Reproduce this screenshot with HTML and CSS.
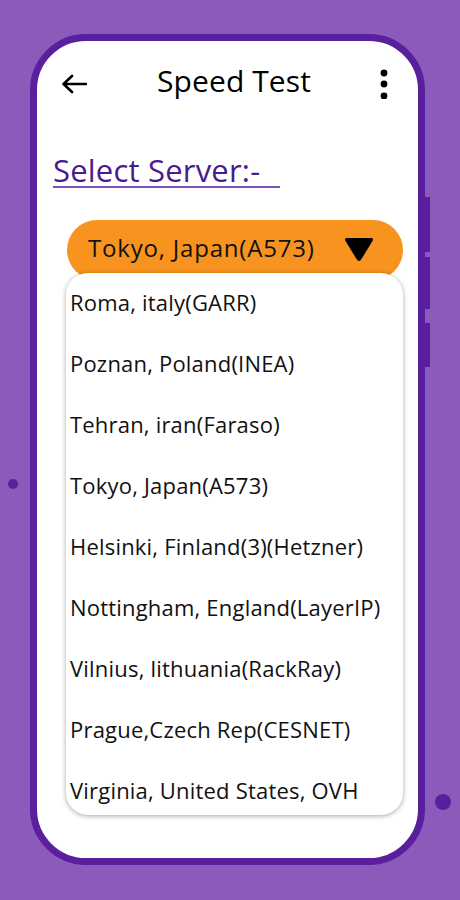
FILE: index.html
```html
<!DOCTYPE html>
<html lang="en">
<head>
  <meta charset="UTF-8">
  <meta name="viewport" content="width=device-width, initial-scale=1.0">
  <title>Speed Test</title>
  <link rel="stylesheet" href="styles.css">
</head>
<body>

  <span class="dot dot-left"></span>
  <span class="dot dot-right"></span>

  <div class="phone">
    <span class="side-btn btn-1"></span>
    <span class="side-btn btn-2"></span>
    <span class="side-btn btn-3"></span>

    <div class="screen">
      <header class="top-bar">
        <svg class="back" width="26" height="20" viewBox="0 0 26 20">
          <path d="M25 10H3M11 2L2.5 10L11 18" fill="none" stroke="#000" stroke-width="2.6" stroke-linecap="round" stroke-linejoin="round"/>
        </svg>
        <h1>Speed Test</h1>
        <svg class="menu" width="8" height="30" viewBox="0 0 8 30">
          <circle cx="4" cy="4" r="3.4"/>
          <circle cx="4" cy="15" r="3.4"/>
          <circle cx="4" cy="27" r="3.4"/>
        </svg>
      </header>

      <h2 class="label">Select Server:-</h2>

      <div class="dropdown">
        <div class="selected">
          <span>Tokyo, Japan(A573)</span>
          <svg class="caret" width="32" height="28" viewBox="0 0 32 28">
            <path d="M4 3H28Q31 3 29.5 6L18.5 24Q16 28 13.5 24L2.5 6Q1 3 4 3Z" fill="#000"/>
          </svg>
        </div>

        <ul class="options">
          <li>Roma, italy(GARR)</li>
          <li>Poznan, Poland(INEA)</li>
          <li>Tehran, iran(Faraso)</li>
          <li>Tokyo, Japan(A573)</li>
          <li>Helsinki, Finland(3)(Hetzner)</li>
          <li>Nottingham, England(LayerIP)</li>
          <li>Vilnius, lithuania(RackRay)</li>
          <li>Prague,Czech Rep(CESNET)</li>
          <li>Virginia, United States, OVH</li>
        </ul>
      </div>
    </div>
  </div>

</body>
</html>
```

FILE: styles.css
```css
/* General Styles */
body {
  font-family: 'Open Sans', 'Noto Sans', sans-serif;
  background-color: #8b5bbb;
  margin: 0;
  padding: 34px 0 0 30px;
  height: 900px;
  box-sizing: border-box;
  overflow: hidden;
  position: relative;
}

.dot {
  position: absolute;
  border-radius: 50%;
  background-color: #5a1f9d;
}

.dot-left {
  left: 8px;
  top: 479px;
  width: 10px;
  height: 10px;
}

.dot-right {
  left: 435px;
  top: 794px;
  width: 16px;
  height: 16px;
}

/* Phone frame */
.phone {
  position: relative;
  width: 395px;
  height: 831px;
  box-sizing: border-box;
  border: 7px solid #5a1f9d;
  border-radius: 56px;
  background-color: #ffffff;
}

.side-btn {
  position: absolute;
  right: -12px;
  width: 5px;
  background-color: #5a1f9d;
}

.btn-1 { top: 156px; height: 55px; }
.btn-2 { top: 216px; height: 52px; }
.btn-3 { top: 282px; height: 44px; }

.screen {
  height: 100%;
  border-radius: 49px;
  overflow: hidden;
}

/* Header */
.top-bar {
  display: flex;
  align-items: center;
  height: 52px;
  margin-top: 17px;
  padding: 0 30px 0 24px;
}

.back {
  flex: none;
}

.top-bar h1 {
  flex: 1;
  margin: -7px 0 0 70px;
  font-size: 30px;
  font-weight: 400;
  letter-spacing: 0.1px;
  color: #000;
}

.menu {
  flex: none;
}

.label {
  display: inline-block;
  margin: 45px 0 0 16px;
  padding-right: 20px;
  font-size: 31px;
  font-weight: 400;
  line-height: 31px;
  letter-spacing: 0.2px;
  color: #4a1a8f;
  border-bottom: 2px solid #7d50bf;
}

/* Dropdown */
.dropdown {
  margin: 32px 0 0 30px;
  width: 336px;
}

.selected {
  display: flex;
  align-items: center;
  justify-content: space-between;
  height: 60px;
  padding: 0 28px 0 21px;
  box-sizing: border-box;
  border-radius: 30px;
  background-color: #f7931e;
  font-size: 24px;
  letter-spacing: 0.8px;
  color: #111;
}

.selected span {
  margin-top: -5px;
}

.caret {
  margin-top: -2px;
}

.options {
  list-style: none;
  margin: -7px 0 0 -1px;
  padding: 0;
  height: 542px;
  overflow: hidden;
  background-color: #ffffff;
  border-radius: 22px;
  box-shadow: 0 1px 5px rgba(0, 0, 0, 0.35);
  position: relative;
}

.options li {
  height: 61px;
  line-height: 58px;
  padding-left: 4px;
  font-size: 22px;
  letter-spacing: 0.2px;
  color: #111;
  white-space: nowrap;
}
```
